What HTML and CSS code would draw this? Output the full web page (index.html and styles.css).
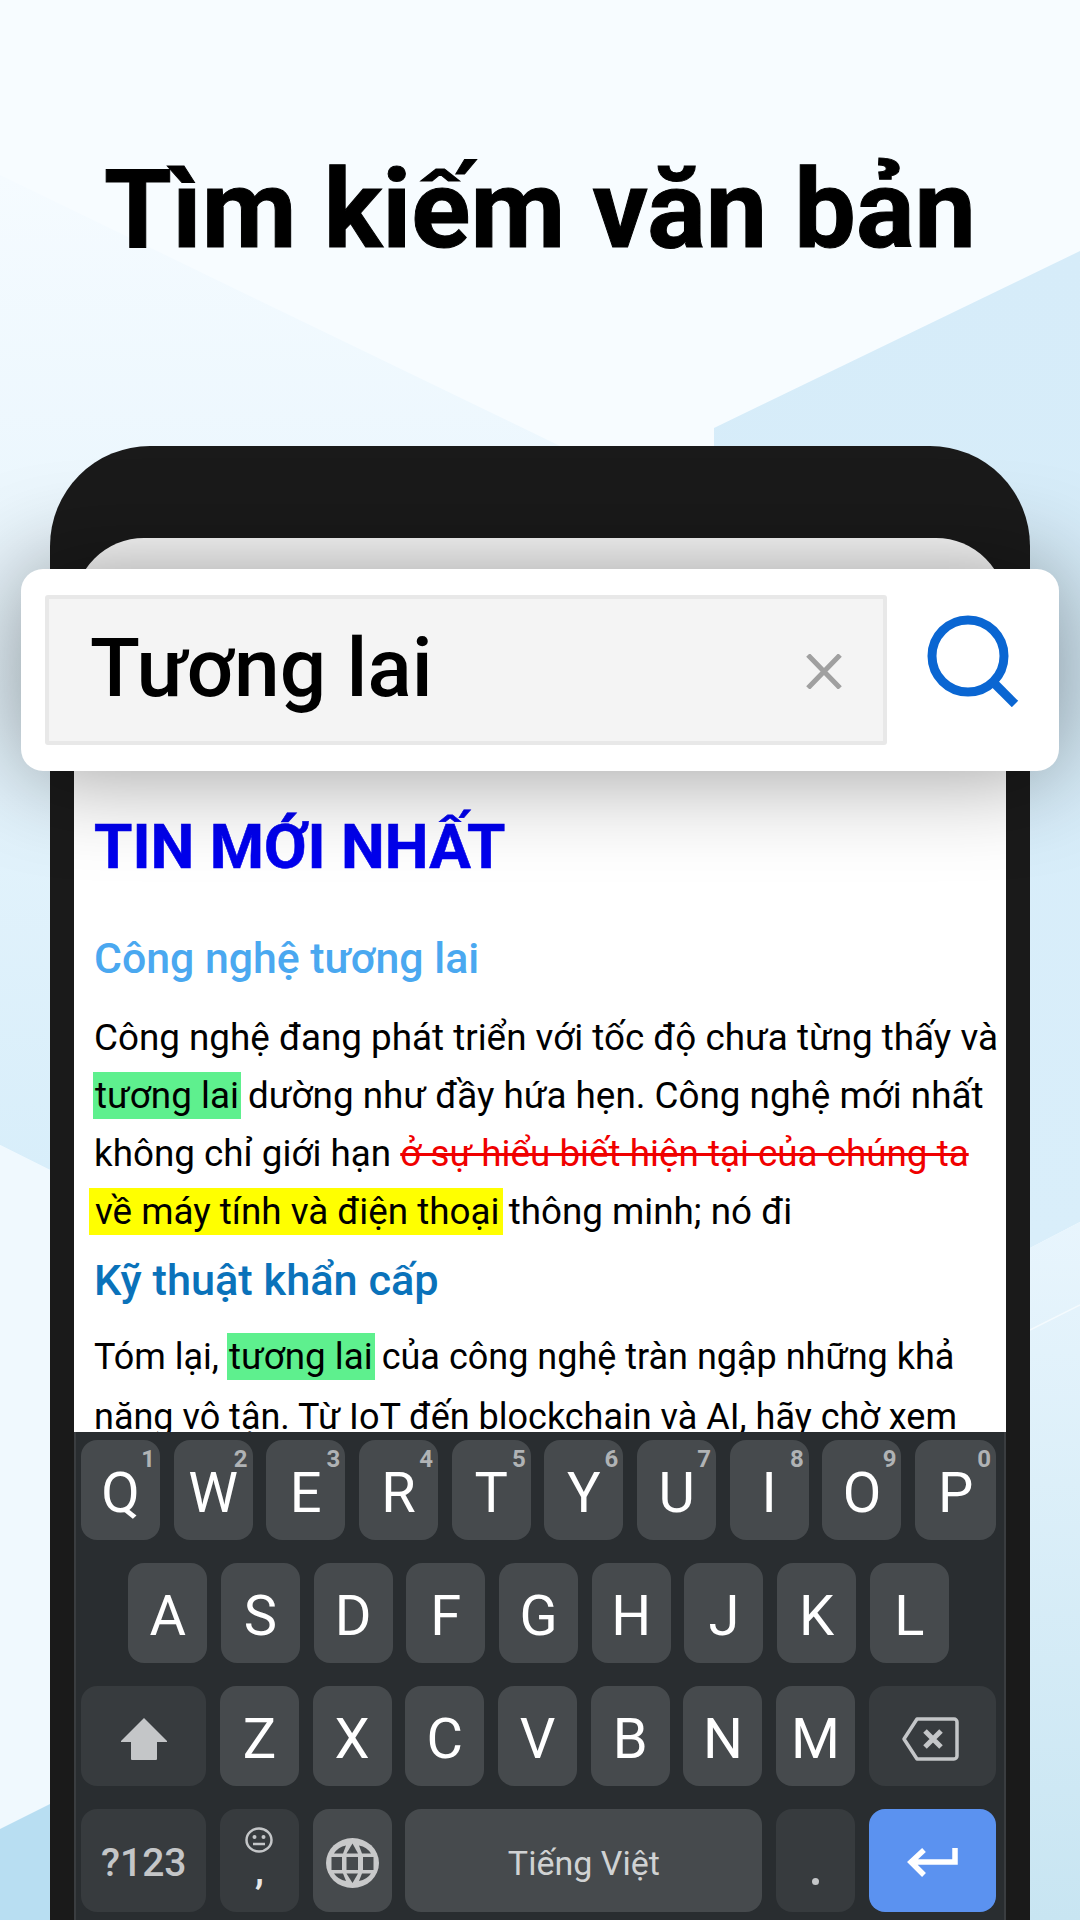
FILE: index.html
```html
<!DOCTYPE html>
<html lang="vi">
<head>
    <meta charset="UTF-8">
    <title>Tìm kiếm văn bản</title>
    <link rel="stylesheet" href="styles.css">
</head>
<body>
    <div class="page">
        <svg class="backdrop" width="1080" height="1920" viewBox="0 0 1080 1920">
            <defs>
                <linearGradient id="sideBlue" x1="0" y1="0" x2="0" y2="1">
                    <stop offset="0" stop-color="#d6ecf9"/>
                    <stop offset="1" stop-color="#d9eefa"/>
                </linearGradient>
                <linearGradient id="sideLight" x1="0" y1="0" x2="0" y2="1">
                    <stop offset="0" stop-color="#e8f5fd"/>
                    <stop offset="1" stop-color="#c8e5f2"/>
                </linearGradient>
                <linearGradient id="leftBlue" x1="0" y1="0" x2="0" y2="1">
                    <stop offset="0" stop-color="#f5fbff"/>
                    <stop offset="1" stop-color="#d8eefa"/>
                </linearGradient>
            </defs>
            <polygon points="0,175 560,446 50,1170 0,1145" fill="url(#leftBlue)"/>
            <polygon points="0,1145 50,1170 50,1804 0,1829" fill="#f0f9fe"/>
            <polygon points="0,1829 50,1804 50,1920 0,1920" fill="#b8def2"/>
            <polygon points="714,428 1080,251 1080,1222 1030,1248 714,1248" fill="url(#sideBlue)"/>
            <polygon points="1030,1248 1080,1222 1080,1920 1030,1920" fill="url(#sideLight)"/>
            <path d="M1030 1330 L1080 1305" stroke="#fff" stroke-opacity="0.6" stroke-width="1.5"/>
        </svg>

        <h1 class="title">Tìm kiếm văn bản</h1>

        <div class="phone">
            <div class="screen">
                <div class="article">
                    <h2 class="news-head">TIN MỚI NHẤT</h2>
                    <h3 class="sub sub-light">Công nghệ tương lai</h3>
                    <p class="para">Công nghệ đang phát triển với tốc độ chưa từng thấy và <span class="mark-green">tương lai</span> dường như đầy hứa hẹn. Công nghệ mới nhất không chỉ giới hạn <span class="strike">ở sự hiểu biết hiện tại của chúng ta</span> <span class="mark-yellow">về máy tính và điện thoại</span> thông minh; nó đi</p>
                    <h3 class="sub sub-dark">Kỹ thuật khẩn cấp</h3>
                    <p class="para para-last">Tóm lại, <span class="mark-green">tương lai</span> của công nghệ tràn ngập những khả năng vô tận. Từ IoT đến blockchain và AI, hãy chờ xem</p>
                </div>
                <div class="keyboard">
                    <div class="row">
                        <div class="key">Q<span class="num">1</span></div>
                        <div class="key">W<span class="num">2</span></div>
                        <div class="key">E<span class="num">3</span></div>
                        <div class="key">R<span class="num">4</span></div>
                        <div class="key">T<span class="num">5</span></div>
                        <div class="key">Y<span class="num">6</span></div>
                        <div class="key">U<span class="num">7</span></div>
                        <div class="key">I<span class="num">8</span></div>
                        <div class="key">O<span class="num">9</span></div>
                        <div class="key key-p">P<span class="num">0</span></div>
                    </div>
                    <div class="row">
                        <div class="key">A</div>
                        <div class="key">S</div>
                        <div class="key">D</div>
                        <div class="key">F</div>
                        <div class="key">G</div>
                        <div class="key">H</div>
                        <div class="key">J</div>
                        <div class="key">K</div>
                        <div class="key">L</div>
                    </div>
                    <div class="row">
                        <div class="key key-wide key-fn">
                            <svg class="icon" width="48" height="42" viewBox="0 0 48 42"><path d="M24 0 L47 23 L47 24 H37 V41 a1 1 0 0 1 -1 1 H12 a1 1 0 0 1 -1 -1 V24 H1 L1 23 Z" fill="#c4c6c8"/></svg>
                        </div>
                        <div class="key">Z</div>
                        <div class="key">X</div>
                        <div class="key">C</div>
                        <div class="key">V</div>
                        <div class="key">B</div>
                        <div class="key">N</div>
                        <div class="key">M</div>
                        <div class="key key-wide key-end key-fn">
                            <svg class="icon icon-del" width="58" height="44" viewBox="0 0 58 44"><path d="M16 2 H53 a3 3 0 0 1 3 3 V39 a3 3 0 0 1 -3 3 H16 L3 22 Z" fill="none" stroke="#c4c6c8" stroke-width="3.5" stroke-linejoin="round"/><path d="M24 14 L40 30 M40 14 L24 30" stroke="#c4c6c8" stroke-width="5" fill="none"/></svg>
                        </div>
                    </div>
                    <div class="row row-last">
                        <div class="key key-wide key-fn key-label">?123</div>
                        <div class="key key-fn key-comma">
                            <svg class="emoji" width="28" height="26" viewBox="0 0 28 26"><ellipse cx="14" cy="13" rx="12.5" ry="11.5" fill="none" stroke="#c4c6c8" stroke-width="2.5"/><circle cx="9.5" cy="10" r="2" fill="#c4c6c8"/><circle cx="18.5" cy="10" r="2" fill="#c4c6c8"/><path d="M8 17 H20" stroke="#c4c6c8" stroke-width="2.5"/></svg>
                            <span class="comma">,</span>
                        </div>
                        <div class="key">
                            <svg class="icon" width="53" height="50" viewBox="0 0 53 50"><ellipse cx="26.5" cy="25" rx="26.5" ry="25" fill="#c8c9ca"/><g fill="#464a4d"><path d="M5.5 19 H16 V32 H5.5 Z"/><path d="M20.5 19 H32 V32 H20.5 Z"/><path d="M37 19 H47.5 V32 H37 Z"/><path d="M26.5 5.5 L32 15.5 H20.5 Z"/><path d="M20.5 35.5 H32 L26.5 45 Z"/><path d="M8 15.5 H17 L20 7.5 Q12 9 8 15.5 Z"/><path d="M45 15.5 H36 L33 7.5 Q41 9 45 15.5 Z"/><path d="M8 35.5 H17 L20 43 Q12 41.5 8 35.5 Z"/><path d="M45 35.5 H36 L33 43 Q41 41.5 45 35.5 Z"/></g></svg>
                        </div>
                        <div class="key key-space">Tiếng Việt</div>
                        <div class="key key-fn key-dot"><span class="dot"></span></div>
                        <div class="key key-wide key-end key-enter">
                            <svg class="icon" width="52" height="32" viewBox="0 0 52 32"><path d="M49 1 V15 H6 M18 3 L5 15 L18 28" fill="none" stroke="#fff" stroke-width="5.5"/></svg>
                        </div>
                    </div>
                </div>
            </div>
        </div>

        <div class="search-card">
            <div class="search-input">
                <span class="search-text">Tương lai</span>
                <svg class="clear" width="36" height="35" viewBox="0 0 36 35"><path d="M2 1 L34 34 M34 1 L2 34" stroke="#a0a0a0" stroke-width="5" fill="none"/></svg>
            </div>
            <svg class="search-btn" width="92" height="92" viewBox="0 0 92 92"><circle cx="41" cy="41" r="36" fill="none" stroke="#0a66d2" stroke-width="9"/><path d="M65 66 L88 89" stroke="#0a66d2" stroke-width="9" fill="none"/></svg>
        </div>
    </div>
</body>
</html>
```

FILE: styles.css
```css
* {
    box-sizing: border-box;
}
html, body {
    margin: 0;
    padding: 0;
}
body {
    font-family: Roboto, "Noto Sans", sans-serif;
}
.page {
    position: relative;
    width: 1080px;
    height: 1920px;
    overflow: hidden;
    background: #f7fcff;
    display: flex;
    flex-direction: column;
    align-items: center;
    padding-top: 140px;
}
.backdrop {
    position: absolute;
    left: 0;
    top: 0;
}
.title {
    position: relative;
    margin: 0;
    height: 140px;
    font-size: 109.5px;
    line-height: 140px;
    font-weight: 700;
    color: #000;
    -webkit-text-stroke: 1px #000;
}

/* phone */
.phone {
    position: relative;
    margin-top: 166px;
    width: 980px;
    height: 1600px;
    flex: none;
    background: #1a1a1a;
    border-radius: 100px 100px 0 0;
    padding: 92px 24px 0;
}
.screen {
    background: #fff;
    height: 100%;
    border-radius: 70px 70px 0 0;
    overflow: hidden;
    display: flex;
    flex-direction: column;
}
.article {
    height: 894px;
    flex: none;
    overflow: hidden;
    padding: 273px 0 0 20px;
}
.news-head {
    margin: 0;
    font-size: 62px;
    line-height: 72px;
    font-weight: 700;
    color: #0000ee;
    -webkit-text-stroke: 0.6px #0000ee;
}
.sub {
    margin: 0;
    line-height: 52px;
    font-weight: 500;
}
.sub-light {
    margin-top: 49px;
    font-size: 42.8px;
    color: #4aa8f0;
}
.sub-dark {
    margin-top: 14px;
    font-size: 43.3px;
    color: #0a72ba;
}
.para {
    margin: 25px 0 0;
    font-size: 36.8px;
    line-height: 58px;
    color: #000;
    width: 912px;
}
.para-last {
    margin-top: 20px;
    font-size: 36px;
    line-height: 59.5px;
}
.mark-green {
    background: #5ef08e;
    padding: 2px;
    margin-left: -1px;
    margin-right: -2px;
    font-size: 36.8px;
}
.mark-yellow {
    background: #ffff00;
    padding: 2px 3px 2px 6px;
    margin-left: -5px;
    margin-right: -3px;
}
.strike {
    color: #f00000;
    text-decoration: line-through;
}

/* keyboard */
.keyboard {
    flex: 1;
    background: #292d30;
    box-shadow: inset -2px 0 #3a3d40, inset 2px 0 #3a3d40;
    padding: 8px 10px 0 7px;
    display: flex;
    flex-direction: column;
    gap: 23px;
}
.row {
    display: flex;
    justify-content: center;
    gap: 13.7px;
    height: 100px;
    flex: none;
}
.row-last {
    height: 103px;
}
.key {
    position: relative;
    width: 79px;
    flex: none;
    background: #464a4d;
    border-radius: 16px;
    color: #fff;
    font-size: 56px;
    line-height: 100px;
    padding-top: 5px;
    text-align: center;
    display: flex;
    align-items: center;
    justify-content: center;
}
.key-p {
    width: 81px;
}
.key-wide {
    width: 125px;
}
.key-end {
    width: 127px;
}
.key-fn {
    background: #373b3e;
}
.key-enter {
    background: #5b92f0;
}
.key-space {
    width: 357px;
    font-size: 34px;
    color: #d0d2d3;
}
.key-label {
    font-size: 39px;
    font-weight: 500;
    color: #c4c6c8;
}
.key-comma {
    flex-direction: column;
    justify-content: flex-start;
    padding-top: 18px;
}
.comma {
    font-size: 36px;
    font-weight: 700;
    line-height: 40px;
    color: #e8e8e8;
    margin-top: -2px;
}
.key-dot {
    align-items: flex-end;
    padding-bottom: 27px;
}
.dot {
    width: 7px;
    height: 7px;
    border-radius: 50%;
    background: #c4c6c8;
}
.icon-del {
    margin-right: 4px;
}
.num {
    position: absolute;
    top: 2px;
    right: 5px;
    font-size: 24px;
    line-height: 34px;
    font-weight: 700;
    color: #b0b3b5;
}

/* search card */
.search-card {
    position: absolute;
    left: 21px;
    top: 569px;
    width: 1038px;
    height: 202px;
    background: #fff;
    border-radius: 22px;
    box-shadow: 0 0 100px rgba(0, 0, 0, 0.42);
    padding: 26px 0 0 24px;
    display: flex;
    align-items: flex-start;
}
.search-input {
    width: 842px;
    height: 150px;
    background: #f4f4f4;
    border: 4px solid #e8e8e8;
    border-radius: 3px;
    padding: 0 41px 0 41px;
    display: flex;
    align-items: center;
    justify-content: space-between;
}
.search-text {
    font-size: 82px;
    font-weight: 500;
    color: #000;
    margin-top: -4px;
}
.clear {
    margin-top: 2px;
}
.search-btn {
    margin: 20px 0 0 40px;
}
```
